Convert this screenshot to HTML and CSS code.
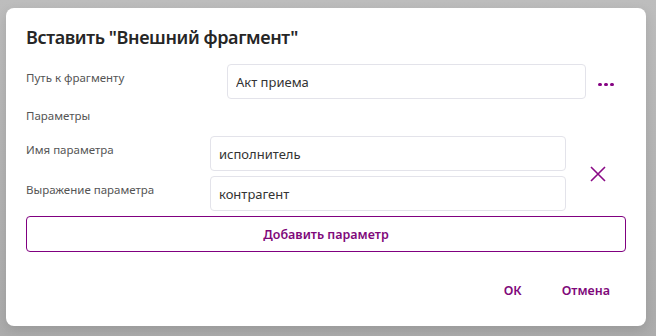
FILE: index.html
```html
<!DOCTYPE html>
<html lang="ru">
<head>
    <meta charset="UTF-8">
    <meta name="viewport" content="width=device-width, initial-scale=1.0">
    <title>Вставить фрагмент</title>
    <link rel="stylesheet" href="styles.css">
</head>
<body>
    <div class="dialog">
        <h1 class="title">Вставить "Внешний фрагмент"</h1>

        <div class="row path-row">
            <div class="label path-label">Путь к фрагменту</div>
            <input type="text" class="field path-field" value="Акт приема">
            <button class="dots-btn" aria-label="Выбрать">
                <span class="dot"></span><span class="dot"></span><span class="dot"></span>
            </button>
        </div>

        <div class="label section-label">Параметры</div>

        <div class="param">
            <div class="param-fields">
                <div class="row">
                    <div class="label param-label">Имя параметра</div>
                    <input type="text" class="field param-field" value="исполнитель">
                </div>
                <div class="row">
                    <div class="label param-label">Выражение параметра</div>
                    <input type="text" class="field param-field" value="контрагент">
                </div>
            </div>
            <button class="remove-btn" aria-label="Удалить">
                <svg width="16" height="16" viewBox="0 0 16 16">
                    <path d="M1 1 L15 15 M15 1 L1 15" stroke="#8a0a86" stroke-width="1.6" fill="none"/>
                </svg>
            </button>
        </div>

        <button class="add-btn">Добавить параметр</button>

        <div class="footer">
            <button class="text-btn">ОК</button>
            <button class="text-btn">Отмена</button>
        </div>
    </div>
</body>
</html>
```

FILE: styles.css
```css
body {
    margin: 0;
    padding: 8px 10px 10px 6px;
    height: 336px;
    box-sizing: border-box;
    font-family: "Noto Sans", "Open Sans", sans-serif;
    background: linear-gradient(180deg, #bdbdbd 0%, #acacac 100%);
    overflow: hidden;
}
.dialog {
    width: 640px;
    height: 318px;
    box-sizing: border-box;
    background: #fff;
    border-radius: 8px;
    padding: 17px 20px 0 20px;
    box-shadow: 0 4px 12px rgba(0, 0, 0, 0.12);
}
.title {
    margin: 0;
    font-size: 18px;
    line-height: 24px;
    font-weight: 600;
    color: #262626;
    letter-spacing: -0.4px;
}
.row {
    display: flex;
    align-items: flex-start;
}
.label {
    font-size: 11.5px;
    line-height: 16px;
    color: #555;
}
.path-row {
    margin-top: 15px;
}
.path-label {
    width: 201px;
    padding-top: 6px;
}
.field {
    height: 35px;
    box-sizing: border-box;
    border: 1px solid #e3e3ea;
    border-radius: 4px;
    padding: 0 8px;
    font-family: inherit;
    font-size: 13px;
    color: #333;
    outline: none;
}
.path-field {
    width: 359px;
}
.dots-btn {
    width: 40px;
    height: 35px;
    border: none;
    background: none;
    padding: 6px 0 0 0;
    display: flex;
    justify-content: center;
    align-items: center;
    gap: 2.5px;
}
.dot {
    width: 3.5px;
    height: 3.5px;
    border-radius: 50%;
    background: #860483;
}
.section-label {
    margin-top: 9px;
}
.param {
    display: flex;
    align-items: center;
    margin-top: 12px;
}
.param-fields {
    display: flex;
    flex-direction: column;
    gap: 5px;
}
.param-label {
    width: 184px;
    padding-top: 6px;
}
.param-field {
    width: 356px;
}
.remove-btn {
    width: 60px;
    height: 20px;
    border: none;
    background: none;
    padding: 0 0 0 4px;
    display: flex;
    justify-content: center;
    align-items: center;
}
.add-btn {
    display: block;
    width: 600px;
    height: 36px;
    margin-top: 5px;
    border: 1.5px solid #800080;
    border-radius: 4px;
    background: #fff;
    font-family: inherit;
    font-size: 12.5px;
    font-weight: 600;
    color: #80087a;
}
.footer {
    display: flex;
    justify-content: flex-end;
    gap: 8px;
    margin-top: 26px;
}
.text-btn {
    border: none;
    background: none;
    padding: 0 16px;
    height: 24px;
    font-family: inherit;
    font-size: 12.5px;
    font-weight: 600;
    color: #80087a;
}
```
